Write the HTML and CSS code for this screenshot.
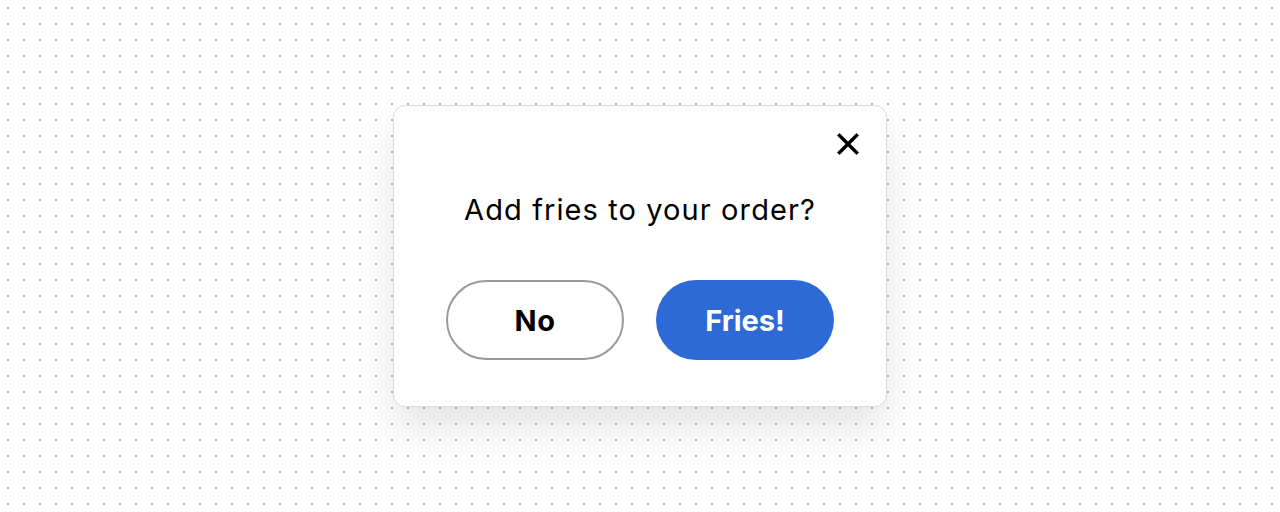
FILE: index.html
```html
<!DOCTYPE html>
<html lang="en">
<head>
<meta charset="utf-8">
<title>Add fries</title>
<link rel="stylesheet" href="styles.css">
</head>
<body>
<div class="stage">
  <div class="dialog" role="dialog" aria-labelledby="dlg-title">
    <div class="dialog-head">
      <button class="close" aria-label="Close">
        <svg viewBox="0 0 22 22" width="22" height="22" aria-hidden="true">
          <path d="M2.5 2.5 L19.5 19.5 M19.5 2.5 L2.5 19.5" stroke="#000" stroke-width="3.4" stroke-linecap="square" fill="none"/>
        </svg>
      </button>
    </div>
    <h2 class="title" id="dlg-title">Add fries to your order?</h2>
    <div class="actions">
      <button class="btn btn-outline">No</button>
      <button class="btn btn-primary">Fries!</button>
    </div>
  </div>
</div>
</body>
</html>
```
FILE: styles.css
```css
html, body {
  margin: 0;
  padding: 0;
}
body {
  width: 1280px;
  height: 512px;
  overflow: hidden;
  background-color: #ffffff;
  background-image: radial-gradient(circle at 1px 1px, #b4b4b4 0.9px, transparent 1.4px);
  background-size: 16px 16px;
  background-position: 7px 7px;
  font-family: "Inter", "Liberation Sans", sans-serif;
}
.stage {
  display: flex;
  justify-content: center;
  padding-top: 105px;
}
.dialog {
  box-sizing: content-box;
  width: 438px;
  background: #fff;
  border: 1px solid #dcdcdc;
  border-radius: 12px;
  box-shadow: 0 22px 40px rgba(0, 0, 0, 0.10);
  padding: 27px 27px 46px 27px;
  display: flex;
  flex-direction: column;
}
.dialog-head {
  display: flex;
  justify-content: flex-end;
}
.close {
  width: 22px;
  height: 22px;
  padding: 0;
  border: 0;
  background: none;
  cursor: pointer;
  display: block;
}
.close svg { display: block; }
.title {
  margin: 37px 0 0 0;
  text-align: center;
  font-size: 29px;
  line-height: 36px;
  font-weight: 400;
  color: #000;
  letter-spacing: 1.1px;
}
.actions {
  display: flex;
  justify-content: center;
  gap: 32px;
  margin-top: 52px;
}
.btn {
  width: 178px;
  height: 80px;
  border-radius: 40px;
  font-family: inherit;
  font-size: 29px;
  font-weight: 700;
  cursor: pointer;
  box-sizing: border-box;
  padding: 0;
}
.btn-outline {
  background: #fff;
  border: 2px solid #999;
  color: #000;
  letter-spacing: 0.5px;
}
.btn-primary {
  background: #2d6ad6;
  border: 0;
  color: #fff;
}
```
